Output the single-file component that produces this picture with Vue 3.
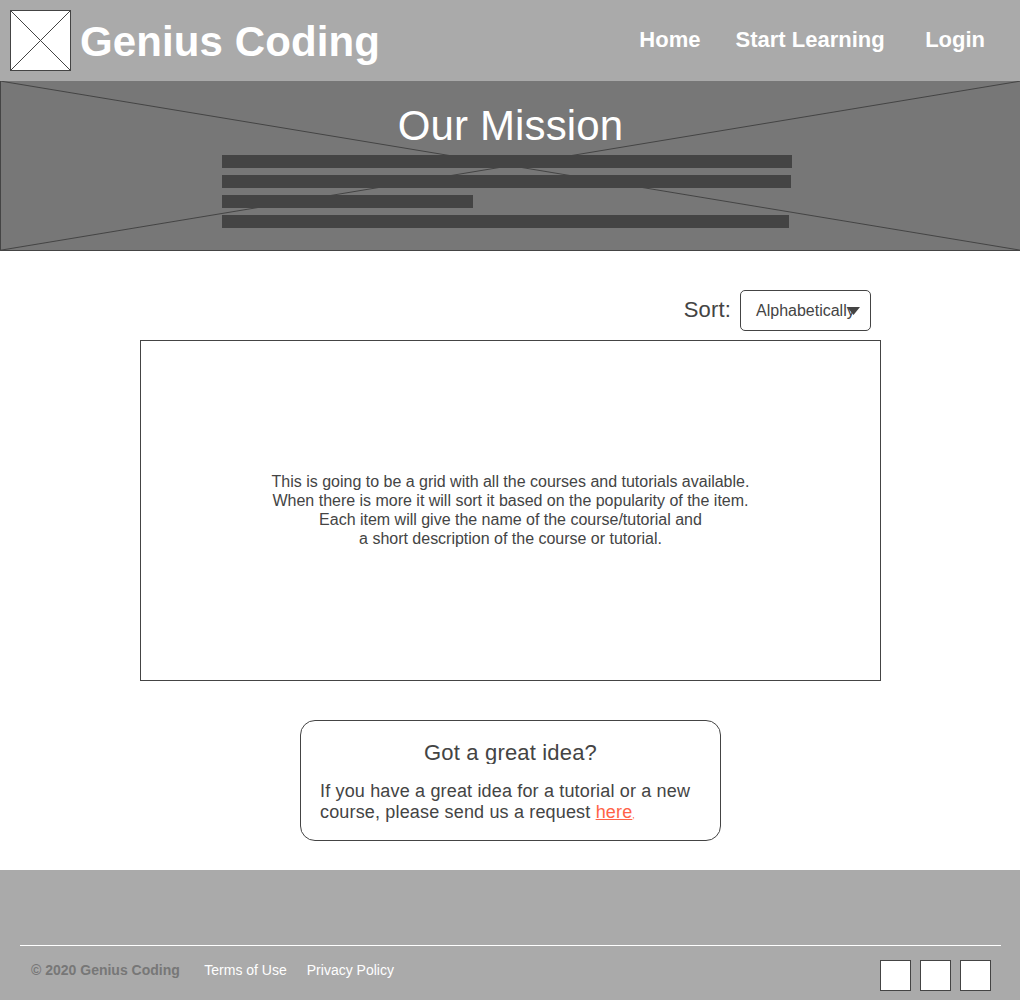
<script setup>
const navLinks = [
  { label: 'Home', cls: 'home' },
  { label: 'Start Learning', cls: 'start' },
  { label: 'Login', cls: 'login' },
]
const missionLines = [570, 569, 251, 567]
const gridText = [
  'This is going to be a grid with all the courses and tutorials available.',
  'When there is more it will sort it based on the popularity of the item.',
  'Each item will give the name of the course/tutorial and',
  'a short description of the course or tutorial.',
]
</script>

<template>
  <div class="page">
    <header class="header">
      <svg class="logo" width="61" height="61" viewBox="0 0 61 61" shape-rendering="crispEdges">
        <rect x="0.5" y="0.5" width="60" height="60" fill="#fff" stroke="#444" />
        <path d="M0.5 0.5L60.5 60.5M60.5 0.5L0.5 60.5" stroke="#444" fill="none" />
      </svg>
      <h1 class="brand">Genius Coding</h1>
      <nav class="nav">
        <a v-for="l in navLinks" :key="l.label" :class="l.cls">{{ l.label }}</a>
      </nav>
    </header>

    <section class="hero">
      <svg class="cross" width="1020" height="170" viewBox="0 0 1020 170">
        <path d="M0 0L1021 169.3M1021 0L0 169.3" stroke="#444" fill="none" />
        <path d="M0.5 0V169.5H1020" stroke="#444" fill="none" />
      </svg>
      <h2 class="mission">Our Mission</h2>
      <div class="bars">
        <div v-for="(w, i) in missionLines" :key="i" class="bar" :style="{ width: w + 'px' }"></div>
      </div>
    </section>

    <main class="main">
      <div class="sort">
        <span class="sort-label">Sort:</span>
        <div class="select">
          <span>Alphabetically</span>
          <svg class="arrow" width="14" height="9" viewBox="0 0 14 9"><path d="M0 0H13L6.5 8Z" fill="#444" /></svg>
        </div>
      </div>
      <div class="courses">
        <p><span v-for="t in gridText" :key="t">{{ t }}</span></p>
      </div>
      <section class="idea">
        <h3>Got a great idea?</h3>
        <p>If you have a great idea for a tutorial or a new<br />course, please send us a request <a>here<small>,</small></a></p>
      </section>
    </main>

    <footer class="footer">
      <div class="footer-row">
        <span class="copy">© 2020 Genius Coding</span>
        <a class="terms">Terms of Use</a>
        <a class="privacy">Privacy Policy</a>
        <div class="socials"><i></i><i></i><i></i></div>
      </div>
    </footer>
  </div>
</template>

<style>
body { background: #fff; }
</style>

<style scoped>
* { box-sizing: border-box; }
h1, h2, h3, p { margin: 0; font-weight: 400; }
.page {
  width: 1020px;
  height: 1000px;
  display: flex;
  flex-direction: column;
  overflow: hidden;
  font-family: "Liberation Sans", Arial, sans-serif;
  color: #444;
  white-space: nowrap;
}
.header {
  height: 81px;
  flex: none;
  display: flex;
  align-items: flex-start;
  padding: 10px 35px 0 10px;
  background: #aaa;
  color: #fff;
}
.logo { display: block; flex: none; }
.brand { margin: 8px 0 0 9px; font-size: 42px; line-height: 47px; font-weight: 700; letter-spacing: 0.11px; }
.nav { display: flex; margin: 17px 0 0 auto; font-size: 22px; line-height: 25px; font-weight: 700; }
.start { margin-left: 35px; }
.login { margin-left: 40.5px; }

.hero {
  position: relative;
  height: 170px;
  flex: none;
  padding-top: 21px;
  background: #777;
}
.cross { position: absolute; left: 0; top: 0; }
.mission {
  position: relative;
  font-size: 42px;
  line-height: 47px;
  letter-spacing: 0.13px;
  padding-left: 1px;
  color: #fff;
  text-align: center;
}
.bars { position: relative; display: flex; flex-direction: column; gap: 7px; margin: 6px 0 0 222px; }
.bar { height: 13px; background: #444; }

.main { height: 619px; flex: none; padding-top: 39px; }
.sort { display: flex; justify-content: flex-end; height: 41px; margin-right: 149px; }
.sort-label { margin: 7px 9px 0 0; font-size: 22px; line-height: 25px; letter-spacing: 0.17px; }
.select {
  position: relative;
  width: 131px;
  height: 41px;
  padding: 11px 0 0 15px;
  border: 1px solid #444;
  border-radius: 5px;
  font-size: 16px;
  line-height: 18px;
}
.arrow { position: absolute; left: 106px; top: 16px; }
.courses {
  width: 741px;
  height: 341px;
  margin: 9px 0 0 140px;
  padding-bottom: 2px;
  border: 1px solid #444;
  display: flex;
  align-items: center;
  justify-content: center;
}
.courses p { font-size: 16px; line-height: 19px; text-align: center; letter-spacing: -0.01px; }
.courses span { display: block; }
.idea {
  width: 421px;
  height: 121px;
  margin: 39px 0 0 300px;
  padding: 19px 0 0 19px;
  border: 1px solid #444;
  border-radius: 15px;
}
.idea h3 { width: 381px; height: 24px; overflow: hidden; font-size: 22px; line-height: 25px; text-align: center; letter-spacing: 0.17px; }
.idea p { margin-top: 17px; font-size: 18px; line-height: 21px; letter-spacing: 0.165px; }
.idea a { color: #ff6347; text-decoration: underline; }
.idea small { display: inline-block; font-size: 9px; line-height: 9px; }

.footer { height: 130px; flex: none; padding: 75px 19px 0 20px; background: #aaa; color: #fff; font-size: 14px; line-height: 16px; }
.footer-row { display: flex; height: 55px; padding: 16px 10px 0 11px; border-top: 1px solid #fff; }
.copy { color: #777; font-weight: 700; }
.terms { margin-left: 24.5px; }
.privacy { margin-left: 20px; }
.socials { display: flex; gap: 9px; margin: -2px 0 0 auto; }
.socials i { width: 31px; height: 31px; background: #fff; border: 1px solid #444; }
</style>
